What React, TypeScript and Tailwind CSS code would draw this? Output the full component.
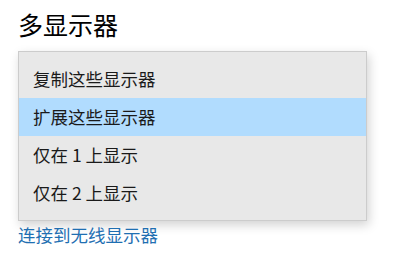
export default function App() {
  const items = ["复制这些显示器", "扩展这些显示器", "仅在 1 上显示", "仅在 2 上显示"];
  const selected = 1;

  return (
    <div
      className="w-[417px] h-[259px] bg-white overflow-hidden pl-[18px] pt-[8px]"
      style={{ fontFamily: '"Noto Sans CJK SC", "Noto Sans", sans-serif' }}
    >
      <h1 className="text-[25px] leading-[32px] text-[#000000] font-normal">多显示器</h1>
      <div className="mt-[11px] w-[349px] border border-[#cccccc] bg-[#e8e8e8] py-[8px] shadow-[2px_4px_10px_rgba(0,0,0,0.18)]">
        {items.map((item, i) => (
          <div
            key={item}
            className={
              "h-[38px] flex items-center pl-[14px] text-[17.5px] text-[#1a1a1a] " +
              (i === selected ? "bg-[#b1dcfe]" : "")
            }
          >
            {item}
          </div>
        ))}
      </div>
      <div className="mt-[2px] text-[17.5px] leading-[24px] text-[#1f6fb2]">连接到无线显示器</div>
    </div>
  );
}
